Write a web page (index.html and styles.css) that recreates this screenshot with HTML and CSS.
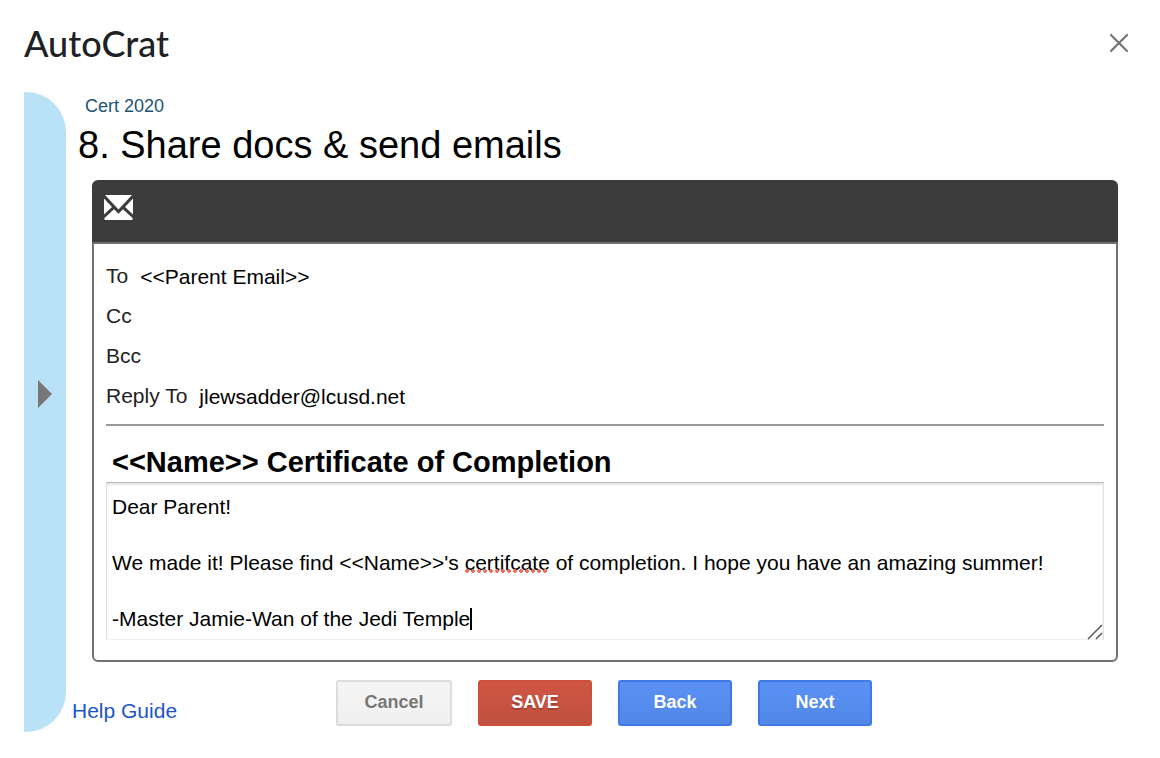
FILE: index.html
```html
<!DOCTYPE html>
<html lang="en">
<head>
    <meta charset="UTF-8">
    <meta name="viewport" content="width=device-width, initial-scale=1.0">
    <title>AutoCrat</title>
    <link rel="stylesheet" href="styles.css">
</head>
<body>
    <header class="dialog-header">
        <h1>AutoCrat</h1>
        <button type="button" class="close" aria-label="Close">
            <svg width="20" height="20" viewBox="0 0 20 20">
                <path d="M2 2L18 18M18 2L2 18" stroke="#757575" stroke-width="2.2" stroke-linecap="round"/>
            </svg>
        </button>
    </header>

    <div class="dialog-body">
        <button type="button" class="drawer" aria-label="Open steps">
            <svg width="14" height="28" viewBox="0 0 14 28">
                <path d="M0 0L14 14L0 28Z" fill="#777"/>
            </svg>
        </button>

        <form class="content">
            <p class="job-name">Cert 2020</p>
            <h2>8. Share docs &amp; send emails</h2>

            <div class="email">
                <div class="email-header">
                    <svg width="29" height="25" viewBox="0 0 29 25">
                        <path d="M1 0H28L14.500 14.500Z" fill="#fff"/>
                        <path d="M0 3.500L8 12L0 19.500ZM29 3.500L21 12L29 19.500Z" fill="#fff"/>
                        <path d="M1 25L0 23.500L10 14.200L14.500 18.800L19 14.200L29 23.500L28 25Z" fill="#fff"/>
                    </svg>
                </div>
                <div class="email-body">
                    <div class="field">
                        <label for="to">To</label>
                        <input type="text" id="to" value="&lt;&lt;Parent Email&gt;&gt;">
                    </div>
                    <div class="field">
                        <label for="cc">Cc</label>
                        <input type="text" id="cc">
                    </div>
                    <div class="field">
                        <label for="bcc">Bcc</label>
                        <input type="text" id="bcc">
                    </div>
                    <div class="field">
                        <label for="reply-to">Reply To</label>
                        <input type="text" id="reply-to" value="jlewsadder@lcusd.net">
                    </div>
                    <hr>
                    <input type="text" class="subject" aria-label="Subject" value="&lt;&lt;Name&gt;&gt; Certificate of Completion">
                    <div class="message">
                        <textarea aria-label="Message" rows="5" spellcheck="false">Dear Parent!

We made it! Please find &lt;&lt;Name&gt;&gt;'s certifcate of completion. I hope you have an amazing summer!

-Master Jamie-Wan of the Jedi Temple</textarea>
                        <span class="misspelled"></span>
                        <span class="caret"></span>
                        <svg class="grip" width="16" height="16" viewBox="0 0 16 16">
                            <path d="M1 15L15 1M9 15L15 9" stroke="#555" stroke-width="1.5"/>
                        </svg>
                    </div>
                </div>
            </div>

            <div class="actions">
                <a href="#" class="help">Help Guide</a>
                <div class="buttons">
                    <button type="button" class="btn cancel">Cancel</button>
                    <button type="button" class="btn save">SAVE</button>
                    <button type="button" class="btn next">Back</button>
                    <button type="button" class="btn next">Next</button>
                </div>
            </div>
        </form>
    </div>
</body>
</html>
```
FILE: styles.css
```css
* {
    box-sizing: border-box;
}
body {
    margin: 0;
    padding: 19px 24px 24px;
    background: #fff;
    color: #000;
    font-family: "Liberation Sans", Arial, sans-serif;
    font-size: 21px;
}
input, textarea, button {
    font-family: inherit;
    font-size: inherit;
}
h1, h2, p {
    margin: 0;
    font-weight: normal;
}
svg {
    display: block;
    fill: none;
}

/* Header */
.dialog-header {
    display: flex;
    justify-content: space-between;
    align-items: center;
    height: 48px;
    margin-bottom: 25px;
}
.dialog-header h1 {
    font-family: Lato, sans-serif;
    font-size: 36px;
    font-weight: 500;
    line-height: 48px;
    color: #202124;
}
.close {
    padding: 7px;
    border: 0;
    background: none;
    cursor: pointer;
}

/* Blue drawer on the left */
.dialog-body {
    display: flex;
}
.drawer {
    display: flex;
    align-items: center;
    width: 42px;
    padding: 0 14px 36px;
    border: 0;
    border-radius: 0 40px 40px 0;
    background: #b9e2f7;
    cursor: pointer;
}
.content {
    flex: 1;
    padding-left: 6px;
}
.job-name {
    padding-left: 13px;
    font-size: 18px;
    line-height: 28px;
    color: #1c5475;
}
h2 {
    padding-left: 6px;
    font-size: 38px;
    line-height: 50px;
    margin-bottom: 10px;
}

/* Email card */
.email {
    margin: 0 18px 18px 20px;
}
.email-header {
    height: 62px;
    padding: 15px 12px;
    border-radius: 6px 6px 0 0;
    background: #3c3c3c;
}
.email-body {
    padding: 12px 12px 20px;
    border: 2px solid #707070;
    border-radius: 0 0 6px 6px;
}
.field {
    display: flex;
    align-items: center;
    gap: 12px;
    height: 40px;
}
.field label {
    color: #222;
}
.field input {
    flex: 1;
    min-width: 0;
    padding: 2px 0 0;
    border: 0;
    background: none;
    outline: none;
}
hr {
    height: 2px;
    margin: 8px 0 16px;
    border: 0;
    background: #999;
}
.subject {
    display: block;
    width: 100%;
    height: 40px;
    padding: 0 6px;
    border: 0;
    font-size: 29px;
    font-weight: bold;
    outline: none;
}
.message {
    position: relative;
}
.message textarea {
    display: block;
    width: 100%;
    height: 158px;
    padding: 10px 5px;
    border: 1px solid #e0e0e0;
    border-top-color: #b8b8b8;
    border-bottom-color: #f0f0f0;
    box-shadow: inset 0 2px 2px #e4e4e4;
    line-height: 28px;
    resize: none;
    outline: none;
    overflow: hidden;
}
/* red dots under the misspelled word */
.misspelled {
    position: absolute;
    left: 358px;
    top: 87px;
    width: 84px;
    height: 4px;
    background: radial-gradient(circle, #f0705f 2px, transparent 2px) 0 0 / 6px 4px;
}
.caret {
    position: absolute;
    left: 364px;
    top: 126px;
    width: 2px;
    height: 22px;
    background: #000;
}
.grip {
    position: absolute;
    right: 1px;
    bottom: 0;
}

/* Footer */
.actions {
    display: grid;
    grid-template-columns: 1fr auto 1fr;
    height: 52px;
}
.help {
    align-self: end;
    margin-bottom: 9px;
    line-height: 24px;
    color: #1a55cc;
    text-decoration: none;
}
.buttons {
    display: flex;
    gap: 26px;
}
.btn {
    width: 114px;
    height: 46px;
    padding: 0 0 2px;
    border: 2px solid;
    border-radius: 3px;
    font-size: 18px;
    font-weight: bold;
    color: #fff;
    cursor: pointer;
}
.cancel {
    width: 116px;
    border-color: #dcdcdc;
    background: linear-gradient(#f5f5f5, #f0f0f0);
    color: #777;
}
.save {
    border-color: #cb5040;
    background: linear-gradient(#d05543, #c05140);
    text-shadow: 0 2px 1px rgba(0,0,0,0.2);
}
.next {
    border-color: #3f79e6;
    background: linear-gradient(#5b91f5, #5187e5);
}
```
